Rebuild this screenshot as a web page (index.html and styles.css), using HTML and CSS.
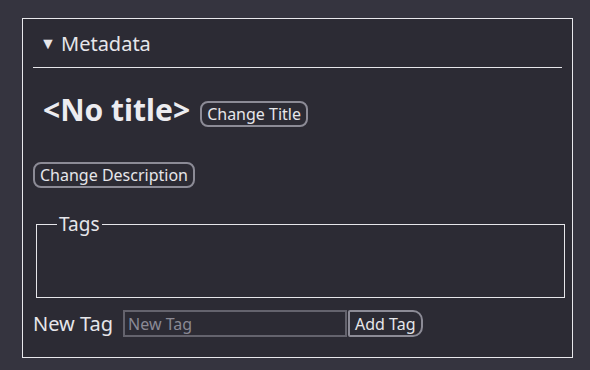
FILE: index.html
```html
<!DOCTYPE html>
<html>
<head>
<meta charset="utf-8">
<link rel="stylesheet" href="styles.css">
</head>
<body>
<div class="panel">
  <div class="summary"><span class="tri">▼</span>Metadata</div>
  <div class="title-row">
    <h1 class="title">&lt;No title&gt;</h1>
    <button class="btn">Change Title</button>
  </div>
  <div class="desc-row">
    <button class="btn">Change Description</button>
  </div>
  <fieldset class="tags">
    <legend>Tags</legend>
  </fieldset>
  <div class="new-tag">
    <label class="lbl">New Tag</label>
    <input class="inp" type="text" placeholder="New Tag">
    <button class="btn add">Add Tag</button>
  </div>
</div>
</body>
</html>
```
FILE: styles.css
```css
html, body {
  margin: 0;
  padding: 0;
  background: #35343f;
  font-family: "Noto Sans", "Open Sans", sans-serif;
  color: #e6e6ea;
}
.panel {
  margin: 18px 0 0 22px;
  width: 529px;
  height: 338px;
  border: 1px solid #e8e8ec;
  background: #2c2b34;
  padding: 0 10px;
}
.summary {
  font-size: 20px;
  line-height: 28px;
  padding: 10px 0 9px 7px;
  border-bottom: 1.5px solid #e6e6ea;
}
.tri {
  font-size: 16px;
  display: inline-block;
  vertical-align: 2px;
  width: 21px;
}
.title-row {
  display: flex;
  align-items: center;
  gap: 10px;
  margin: 26px 0 0 10px;
  height: 32px;
}
.title {
  margin: 0;
  font-size: 30px;
  font-weight: bold;
  line-height: 32px;
  color: #ececf0;
}
.btn {
  font-family: inherit;
  font-size: 16px;
  line-height: 20px;
  color: #e6e6ea;
  background: transparent;
  border: 2px solid #8c8b96;
  border-radius: 8px;
  padding: 0 5px;
  height: 26px;
}
.title-row .btn {
  margin-top: 7px;
}
.desc-row {
  margin-top: 36px;
}
.tags {
  margin: 25px -3px 0 3px;
  height: 83px;
  border: 1px solid #e6e6ea;
  padding: 0 20px;
}
.tags legend {
  font-size: 19px;
  padding: 0 2px;
  line-height: 22px;
}
.new-tag {
  display: flex;
  align-items: center;
  margin-top: 12px;
}
.lbl {
  font-size: 20px;
  margin-right: 10px;
}
.inp {
  box-sizing: border-box;
  width: 224px;
  height: 27px;
  border: 2px solid #64636d;
  background: transparent;
  color: #e6e6ea;
  font-family: inherit;
  font-size: 16px;
  padding: 0 3px;
  margin: 0 1px 0 0;
}
.inp::placeholder {
  color: #8a8994;
}
.add {
  height: 27px;
  border-radius: 2px 10px 10px 2px;
  padding: 0 5px;
}
```
